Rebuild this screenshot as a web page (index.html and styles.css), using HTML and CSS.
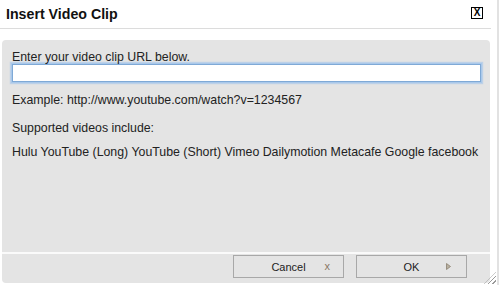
FILE: index.html
```html
<!DOCTYPE html>
<html>
<head>
<meta charset="utf-8">
<link rel="stylesheet" href="styles.css">
</head>
<body>
<div class="dialog">
  <div class="titlebar">
    <span class="title">Insert Video Clip</span>
    <span class="close">X</span>
  </div>
  <div class="panel">
    <div class="content">
      <div class="label">Enter your video clip URL below.</div>
      <input class="url" type="text">
      <div class="line example">Example: http://www.youtube.com/watch?v=1234567</div>
      <div class="line supported">Supported videos include:</div>
      <div class="line list">Hulu YouTube (Long) YouTube (Short) Vimeo Dailymotion Metacafe Google facebook</div>
    </div>
    <div class="footer">
      <button class="btn"><span class="btn-text">Cancel</span><span class="btn-icon x">x</span></button>
      <button class="btn"><span class="btn-text">OK</span><span class="btn-icon tri"><svg width="5" height="7" viewBox="0 0 5 7"><path d="M0.5 0.5 L4.5 3.5 L0.5 6.5 Z" fill="#b8b0a0" stroke="#8a8070" stroke-width="0.8"/></svg></span></button>
    </div>
  </div>
  <div class="grip"></div>
</div>
</body>
</html>
```
FILE: styles.css
```css
html, body {
  margin: 0;
  padding: 0;
  background: #ffffff;
}
body {
  font-family: "Liberation Sans", Arial, sans-serif;
  color: #222;
  width: 499px;
  height: 285px;
  overflow: hidden;
}
.dialog {
  position: relative;
  width: 499px;
  height: 285px;
  border-right: 2px solid #e2e2e2;
  box-sizing: border-box;
  display: flex;
  flex-direction: column;
}
.titlebar {
  height: 29px;
  box-sizing: border-box;
  margin-right: 6px;
  border-bottom: 1px solid #dcdcdc;
  display: flex;
  align-items: flex-start;
  justify-content: space-between;
  padding: 6px 8px 0 6px;
}
.title {
  font-weight: bold;
  font-size: 14.2px;
  line-height: 16px;
  color: #111;
}
.close {
  margin-top: 1px;
  width: 12px;
  height: 12px;
  box-sizing: border-box;
  border: 1px solid #000;
  font-size: 10px;
  font-weight: bold;
  line-height: 10px;
  text-align: center;
  color: #000;
}
.panel {
  margin: 11px 7px 2px 2px;
  flex: 1;
  background: #e4e4e4;
  border-radius: 4px;
  display: flex;
  flex-direction: column;
}
.content {
  flex: 1;
  padding: 10px 0 0 10px;
  font-size: 12.35px;
}
.label {
  line-height: 14px;
}
.url {
  display: block;
  margin: 0;
  width: 469px;
  height: 18px;
  box-sizing: border-box;
  border: 1px solid #7fa9d6;
  box-shadow: 0 0 0 1px #a9c8ea, 0 0 1px 2px rgba(150, 190, 235, 0.5);
  background: #fff;
  outline: none;
  padding: 0;
}
.line {
  line-height: 14px;
}
.example {
  margin-top: 11px;
}
.supported {
  margin-top: 14px;
}
.list {
  margin-top: 10px;
}
.footer {
  height: 31px;
  border-top: 2px solid #fafafa;
  display: flex;
  justify-content: flex-end;
  gap: 12px;
  padding: 1px 23px 0 0;
  box-sizing: border-box;
}
.btn {
  position: relative;
  width: 111px;
  height: 23px;
  margin: 0;
  padding: 0;
  border: 1px solid #a8a8a8;
  background: #e4e4e4;
  font-family: "Liberation Sans", Arial, sans-serif;
  font-size: 11px;
  color: #222;
  display: flex;
  align-items: center;
  justify-content: center;
}
.btn-icon {
  position: absolute;
  right: 13px;
  top: 5px;
  line-height: 12px;
}
.x {
  color: #8a7866;
  font-size: 11px;
  top: 4px;
}
.tri {
  top: 7px;
  right: 15px;
  display: flex;
}
.grip {
  position: absolute;
  right: 1px;
  bottom: 1px;
  width: 12px;
  height: 12px;
  background: repeating-linear-gradient(135deg, transparent 0 2px, #9a9a9a 2px 3px);
  clip-path: polygon(100% 0, 100% 100%, 0 100%);
}
```
